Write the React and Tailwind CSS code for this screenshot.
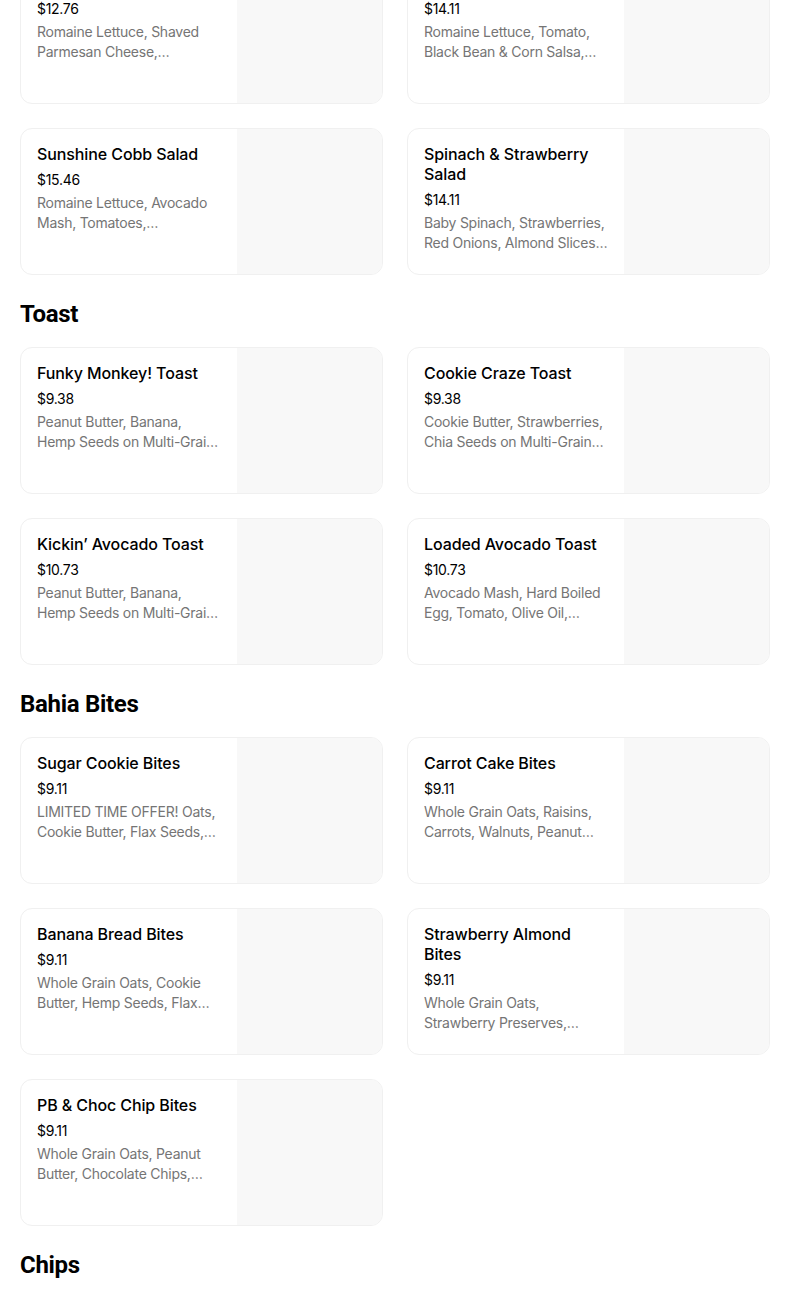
const sections = [
  {
    title: null,
    items: [
      { name: 'Classic Caesar Salad', price: '$12.76', desc: 'Romaine Lettuce, Shaved Parmesan Cheese, Croutons, Caesar Dressing' },
      { name: 'Southwest Salad', price: '$14.11', desc: 'Romaine Lettuce, Tomato, Black Bean & Corn Salsa, Tortilla Strips, Chipotle Ranch' },
      { name: 'Sunshine Cobb Salad', price: '$15.46', desc: 'Romaine Lettuce, Avocado Mash, Tomatoes, Caramelized Onions, Hard Boiled Egg' },
      { name: 'Spinach & Strawberry Salad', price: '$14.11', desc: 'Baby Spinach, Strawberries, Red Onions, Almond Slices, Goat Cheese' },
    ],
  },
  {
    title: 'Toast',
    items: [
      { name: 'Funky Monkey! Toast', price: '$9.38', desc: 'Peanut Butter, Banana, Hemp Seeds on Multi-Grain Bread, Honey' },
      { name: 'Cookie Craze Toast', price: '$9.38', desc: 'Cookie Butter, Strawberries, Chia Seeds on Multi-Grain Bread' },
      { name: 'Kickin’ Avocado Toast', price: '$10.73', desc: 'Peanut Butter, Banana, Hemp Seeds on Multi-Grain Bread, Honey' },
      { name: 'Loaded Avocado Toast', price: '$10.73', desc: 'Avocado Mash, Hard Boiled Egg, Tomato, Olive Oil, Everything Seasoning' },
    ],
  },
  {
    title: 'Bahia Bites',
    items: [
      { name: 'Sugar Cookie Bites', price: '$9.11', desc: 'LIMITED TIME OFFER! Oats, Cookie Butter, Flax Seeds, Honey, Sprinkles' },
      { name: 'Carrot Cake Bites', price: '$9.11', desc: 'Whole Grain Oats, Raisins, Carrots, Walnuts, Peanut Butter, Cinnamon' },
      { name: 'Banana Bread Bites', price: '$9.11', desc: 'Whole Grain Oats, Cookie Butter, Hemp Seeds, Flax Seeds, Banana' },
      { name: 'Strawberry Almond Bites', price: '$9.11', desc: 'Whole Grain Oats, Strawberry Preserves, Almond Butter, Honey' },
      { name: 'PB & Choc Chip Bites', price: '$9.11', desc: 'Whole Grain Oats, Peanut Butter, Chocolate Chips, Flaxseeds, Honey' },
    ],
  },
];

// card: text column left, empty image slot right
function ItemCard({ item }) {
  return (
    <div className="flex h-[147px] rounded-[12px] border border-[#f0f0f0] overflow-hidden bg-white">
      <div className="flex-1 min-w-0 px-4 pt-[15px]" style={{ fontFamily: 'Inter, Roboto, sans-serif' }}>
        <div className="text-[16px] leading-[20px] font-medium text-black tracking-[-0.1px]">{item.name}</div>
        <div className="mt-[6px] text-[14px] leading-[20px] text-black tracking-[-0.3px]">{item.price}</div>
        <div className="mt-[3px] text-[14px] leading-[20px] text-[#757575] tracking-[-0.25px] line-clamp-2">{item.desc}</div>
      </div>
      <div className="w-[145px] shrink-0 bg-[#f8f8f8]" />
    </div>
  );
}

export default function App() {
  return (
    <div className="bg-white min-h-[1297px] overflow-hidden" style={{ fontFamily: 'Roboto, "Liberation Sans", sans-serif' }}>
      <div className="ml-5 w-[750px] -mt-[43px]">
        {sections.map((s, i) => (
          <div key={i}>
            {s.title && (
              <h2 className="mt-[23px] mb-[17px] text-[24px] leading-[32px] font-bold text-black tracking-[-0.3px]">{s.title}</h2>
            )}
            <div className="grid grid-cols-2 gap-6">
              {s.items.map(item => (
                <ItemCard key={item.name} item={item} />
              ))}
            </div>
          </div>
        ))}
        <h2 className="mt-[23px] mb-[17px] text-[24px] leading-[32px] font-bold text-black tracking-[-0.3px]">Chips</h2>
      </div>
    </div>
  );
}
